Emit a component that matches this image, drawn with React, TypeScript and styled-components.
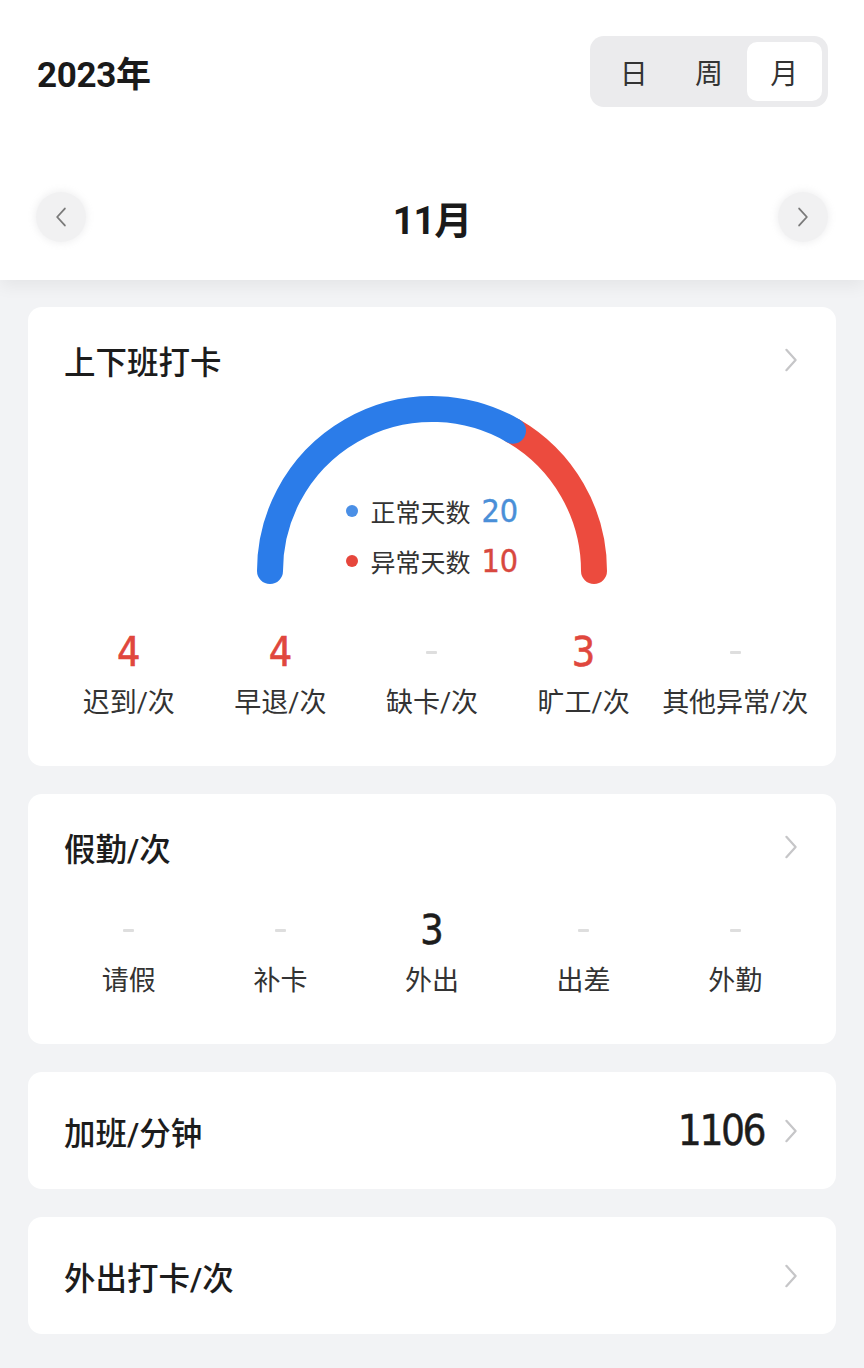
import React from 'react';
import styled, { createGlobalStyle } from 'styled-components';

const GlobalStyle = createGlobalStyle`
    html, body {
        margin: 0;
        padding: 0;
        background: #f2f3f5;
    }
    body {
        font-family: Roboto, "Noto Sans CJK SC", sans-serif;
        color: #222;
    }
`;

const NUM_FONT = `"DejaVu Sans Condensed", "Roboto", "Noto Sans CJK SC", sans-serif`;

const Page = styled.div`
    width: 864px;
    min-height: 1368px;
    background: #f2f3f5;
    display: flex;
    flex-direction: column;
    padding-bottom: 30px;
`;

const Header = styled.div`
    background: #fff;
    padding: 36px 36px 38px 36px;
    box-shadow: 0 6px 16px rgba(0, 0, 0, 0.06);
    display: flex;
    flex-direction: column;
    gap: 85px;
    position: relative;
    z-index: 1;
`;

const TopRow = styled.div`
    display: flex;
    justify-content: space-between;
    align-items: center;
    height: 71px;
`;

const Year = styled.div`
    font-size: 35px;
    font-weight: 700;
    padding-left: 1px;
    letter-spacing: -0.3px;
    color: #1a1a1a;
`;

const Segmented = styled.div`
    display: flex;
    width: 238px;
    height: 71px;
    box-sizing: border-box;
    padding: 6px;
    border-radius: 14px;
    background: #ebebed;
`;

const SegItem = styled.div<{ $active?: boolean }>`
    flex: 1;
    display: flex;
    align-items: center;
    justify-content: center;
    font-size: 28px;
    color: #333;
    border-radius: 10px;
    background: ${(p) => (p.$active ? '#fff' : 'transparent')};
`;

const MonthRow = styled.div`
    display: flex;
    justify-content: space-between;
    align-items: center;
    height: 50px;
`;

const RoundButton = styled.div`
    width: 50px;
    height: 50px;
    border-radius: 50%;
    background: #f1f1f2;
    box-shadow: 0 0 6px 2px rgba(241, 241, 242, 0.9);
    display: flex;
    align-items: center;
    justify-content: center;
`;

const Month = styled.div`
    font-size: 38px;
    font-weight: 700;
    letter-spacing: -1px;
    color: #1a1a1a;
`;

const Cards = styled.div`
    display: flex;
    flex-direction: column;
    gap: 28px;
    padding: 27px 28px 0 28px;
`;

const Card = styled.div`
    background: #fff;
    border-radius: 14px;
    display: flex;
    flex-direction: column;
`;

const CardHeader = styled.div`
    display: flex;
    justify-content: space-between;
    align-items: center;
    padding: 36px 38px 0 36px;
    height: 34px;
`;

const CardTitle = styled.div`
    font-size: 31.5px;
    font-weight: 500;
    color: #1c1c1c;
`;

const GaugeWrap = styled.div`
    position: relative;
    width: 380px;
    height: 196px;
    margin: 13px auto 0 auto;
`;

const Legend = styled.div`
    position: absolute;
    left: 0;
    right: 0;
    top: 100px;
    display: flex;
    flex-direction: column;
    align-items: center;
    gap: 8px;
`;

const LegendRow = styled.div`
    display: flex;
    align-items: center;
    height: 42px;
`;

const Dot = styled.span<{ $color: string }>`
    width: 12px;
    height: 12px;
    border-radius: 50%;
    background: ${(p) => p.$color};
    margin-right: 12px;
`;

const LegendLabel = styled.span`
    font-size: 25px;
    color: #333;
`;

const LegendValue = styled.span<{ $color: string }>`
    font-family: ${NUM_FONT};
    font-size: 32px;
    color: ${(p) => p.$color};
    -webkit-text-stroke: 0.4px currentColor;
    margin-left: 11px;
    width: 36px;
`;

const StatsGrid = styled.div<{ $top: number }>`
    display: grid;
    grid-template-columns: repeat(5, 1fr);
    padding: ${(p) => p.$top}px 25px 45px 25px;
`;

const Stat = styled.div`
    display: flex;
    flex-direction: column;
    align-items: center;
    gap: 11px;
`;

const StatValue = styled.div<{ $color: string }>`
    height: 44px;
    display: flex;
    align-items: center;
    font-family: ${NUM_FONT};
    font-size: 41px;
    color: ${(p) => p.$color};
    -webkit-text-stroke: 0.6px currentColor;
`;

const Dash = styled.span`
    width: 11px;
    height: 3px;
    border-radius: 1px;
    background: #dedede;
`;

const StatLabel = styled.div`
    font-size: 27px;
    line-height: 36px;
    color: #333;
    white-space: nowrap;
`;

const RowCard = styled(Card)`
    flex-direction: row;
    align-items: center;
    justify-content: space-between;
    height: 117px;
    padding: 0 38px 0 36px;
`;

const RowRight = styled.div`
    display: flex;
    align-items: center;
    gap: 20px;
`;

const BigValue = styled.div`
    font-family: ${NUM_FONT};
    font-size: 42px;
    color: #1c1c1c;
    letter-spacing: -2.5px;
    -webkit-text-stroke: 0.4px currentColor;
`;

const Chevron = ({ color = '#c6c6c8', dir = 'right', size = 24 }: { color?: string; dir?: 'left' | 'right'; size?: number }) => (
    <svg width={size / 2 + 2} height={size} viewBox="0 0 14 26" fill="none">
        <path
            d={dir === 'right' ? 'M2 2 L12 13 L2 24' : 'M12 2 L2 13 L12 24'}
            stroke={color}
            strokeWidth={2.4}
            strokeLinecap="round"
            strokeLinejoin="round"
        />
    </svg>
);

const polar = (cx: number, cy: number, r: number, deg: number) => {
    const a = (deg * Math.PI) / 180;
    return { x: cx + r * Math.cos(a), y: cy - r * Math.sin(a) };
};

const arcPath = (cx: number, cy: number, r: number, from: number, to: number) => {
    const s = polar(cx, cy, r, from);
    const e = polar(cx, cy, r, to);
    return `M ${s.x} ${s.y} A ${r} ${r} 0 0 1 ${e.x} ${e.y}`;
};

const Gauge = ({ normal, abnormal }: { normal: number; abnormal: number }) => {
    const cx = 190;
    const cy = 181;
    const r = 162;
    const split = 180 - (180 * normal) / (normal + abnormal);
    return (
        <GaugeWrap>
            <svg width={380} height={196} viewBox="0 0 380 196">
                <path d={arcPath(cx, cy, r, split, 0)} stroke="#ec4b3e" strokeWidth={26} fill="none" strokeLinecap="round" />
                <path d={arcPath(cx, cy, r, 180, split)} stroke="#2b7ce9" strokeWidth={26} fill="none" strokeLinecap="round" />
            </svg>
            <Legend>
                <LegendRow>
                    <Dot $color="#4a8fe6" />
                    <LegendLabel>正常天数</LegendLabel>
                    <LegendValue $color="#4a8fd8">{normal}</LegendValue>
                </LegendRow>
                <LegendRow>
                    <Dot $color="#e6463c" />
                    <LegendLabel>异常天数</LegendLabel>
                    <LegendValue $color="#d8483f">{abnormal}</LegendValue>
                </LegendRow>
            </Legend>
        </GaugeWrap>
    );
};

type StatItem = { label: string; value: number | null };

const StatsRow = ({ items, color, top }: { items: StatItem[]; color: string; top: number }) => (
    <StatsGrid $top={top}>
        {items.map((item) => (
            <Stat key={item.label}>
                <StatValue $color={color}>{item.value === null ? <Dash /> : item.value}</StatValue>
                <StatLabel>{item.label}</StatLabel>
            </Stat>
        ))}
    </StatsGrid>
);

const clockStats: StatItem[] = [
    { label: '迟到/次', value: 4 },
    { label: '早退/次', value: 4 },
    { label: '缺卡/次', value: null },
    { label: '旷工/次', value: 3 },
    { label: '其他异常/次', value: null },
];

const leaveStats: StatItem[] = [
    { label: '请假', value: null },
    { label: '补卡', value: null },
    { label: '外出', value: 3 },
    { label: '出差', value: null },
    { label: '外勤', value: null },
];

const App = () => (
    <Page>
        <GlobalStyle />
        <Header>
            <TopRow>
                <Year>2023年</Year>
                <Segmented>
                    <SegItem>日</SegItem>
                    <SegItem>周</SegItem>
                    <SegItem $active>月</SegItem>
                </Segmented>
            </TopRow>
            <MonthRow>
                <RoundButton>
                    <Chevron dir="left" color="#7a7a7a" size={20} />
                </RoundButton>
                <Month>11月</Month>
                <RoundButton>
                    <Chevron color="#7a7a7a" size={20} />
                </RoundButton>
            </MonthRow>
        </Header>
        <Cards>
            <Card>
                <CardHeader>
                    <CardTitle>上下班打卡</CardTitle>
                    <Chevron />
                </CardHeader>
                <Gauge normal={20} abnormal={10} />
                <StatsRow items={clockStats} color="#e0473d" top={44} />
            </Card>
            <Card>
                <CardHeader>
                    <CardTitle>假勤/次</CardTitle>
                    <Chevron />
                </CardHeader>
                <StatsRow items={leaveStats} color="#1c1c1c" top={44} />
            </Card>
            <RowCard>
                <CardTitle>加班/分钟</CardTitle>
                <RowRight>
                    <BigValue>1106</BigValue>
                    <Chevron />
                </RowRight>
            </RowCard>
            <RowCard>
                <CardTitle>外出打卡/次</CardTitle>
                <Chevron />
            </RowCard>
        </Cards>
    </Page>
);

export default App;
